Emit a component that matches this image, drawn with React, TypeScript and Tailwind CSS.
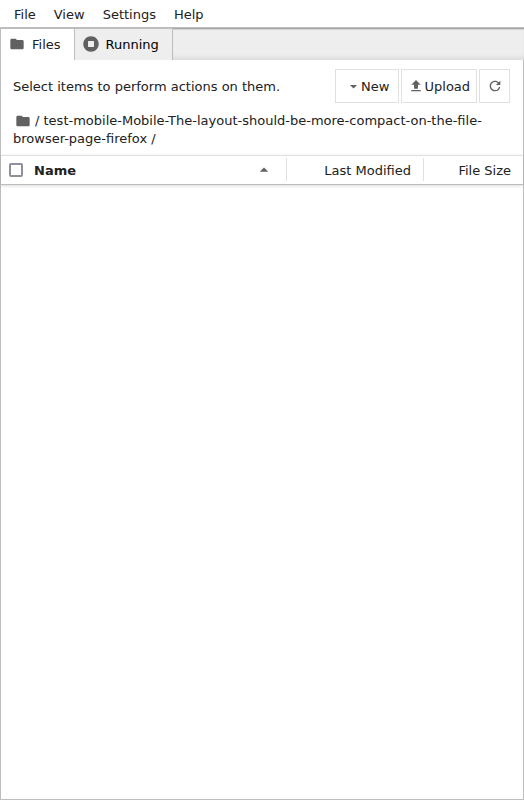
import React from 'react';

const FolderIcon = ({ className = '' }: { className?: string }) => (
  <svg viewBox="0 0 24 24" className={`shrink-0 fill-[#616161] ${className}`}>
    <path d="M10 4H4c-1.1 0-1.99.9-1.99 2L2 18c0 1.1.9 2 2 2h16c1.1 0 2-.9 2-2V8c0-1.1-.9-2-2-2h-8l-2-2z" />
  </svg>
);

const RunningIcon = () => (
  <svg viewBox="0 0 512 512" className="size-4 shrink-0 fill-[#616161]">
    <path d="M256 8C119 8 8 119 8 256s111 248 248 248 248-111 248-248S393 8 256 8zm96 328c0 8.8-7.2 16-16 16H176c-8.8 0-16-7.2-16-16V176c0-8.8 7.2-16 16-16h160c8.8 0 16 7.2 16 16v160z" />
  </svg>
);

const button = 'flex h-[34px] shrink-0 items-center border border-[#e0e0e0] bg-white';

export default function App() {
  return (
    <div className="flex h-[800px] w-[524px] flex-col overflow-hidden bg-white font-['DejaVu_Sans',sans-serif] text-[13px] leading-[18px] text-[#212121]">
      <nav className="flex h-7 shrink-0 items-center gap-[18px] border-b border-[#bdbdbd] pt-[3px] pl-3.5">
        <span>File</span>
        <span>View</span>
        <span>Settings</span>
        <span>Help</span>
      </nav>
      <div className="flex h-8 shrink-0 bg-[#eeeeee] shadow-[inset_0_-5px_6px_-4px_rgba(0,0,0,0.12)]">
        <div className="flex w-[75px] items-center border-x border-t border-[#bdbdbd] bg-white pl-2">
          <FolderIcon className="-mt-px size-4" />
          <span className="ml-[7px]">Files</span>
        </div>
        <div className="flex w-[98px] items-center border-t border-r border-[#bdbdbd] bg-[#eeeeee] pl-2 text-black">
          <span className="-mt-px"><RunningIcon /></span>
          <span className="ml-[6.5px]">Running</span>
        </div>
        <div className="flex-1 border-t border-[#a8a8a8] shadow-[inset_0_1px_0_#d2d2d2]" />
      </div>
      <main className="flex flex-1 flex-col border-x border-b border-[#bdbdbd]">
        <div className="flex h-[52px] items-center gap-0.5 pr-[13px] pl-3">
          <span className="flex-1 pt-0.5">Select items to perform actions on them.</span>
          <button className={`${button} w-16 pl-[8.5px]`}>
            <svg viewBox="0 0 18 18" className="size-[17px] fill-[#616161]"><path d="M5.2 7.5 9 11.2l3.8-3.7z" /></svg>
            <span className="-ml-[0.5px] pt-0.5">New</span>
          </button>
          <button className={`${button} w-[76px] pl-1.5`}>
            <svg viewBox="0 0 24 24" className="size-4 fill-[#616161]"><path d="M9 16h6v-6h4l-7-7-7 7h4zm-4 2h14v2H5z" /></svg>
            <span className="ml-[0.5px] pt-0.5">Upload</span>
          </button>
          <button className={`${button} w-[31px] justify-center`}>
            <svg viewBox="0 0 18 18" className="size-4 fill-[#616161]"><path d="M9 13.5c-2.49 0-4.5-2.01-4.5-4.5S6.51 4.5 9 4.5c1.24 0 2.36.52 3.17 1.33L10 8h5V3l-1.76 1.76C12.15 3.68 10.66 3 9 3 5.69 3 3.01 5.69 3.01 9S5.69 15 9 15c2.97 0 5.43-2.16 5.9-5h-1.52c-.46 2-2.24 3.5-4.38 3.5z" /></svg>
          </button>
        </div>
        <div className="h-[43px] shrink-0 pl-3">
          <div className="flex h-[18px] items-center whitespace-pre">
            <FolderIcon className="mr-1 ml-0.5 size-4" />
            <span>/ test-mobile-Mobile-The-layout-should-be-more-compact-on-the-file-</span>
          </div>
          <div>browser-page-firefox /</div>
        </div>
        <div className="flex h-[30px] shrink-0 items-start border-t border-b border-t-[#e0e0e0] border-b-[#bdbdbd] pt-0.5 shadow-[0_1px_3px_rgba(0,0,0,0.15)]">
          <div className="flex h-[23px] w-[286px] items-center border-r border-[#e0e0e0] pl-2">
            <span className="size-3.5 rounded-[2px] border-2 border-[#8f8f9d]" />
            <strong className="ml-[11px] flex-1 pt-[3px]">Name</strong>
            <svg viewBox="0 0 18 18" className="mr-3 size-5 fill-[#616161]"><path d="M5.2 10.5 9 6.8l3.8 3.7z" /></svg>
          </div>
          <div className="flex h-[23px] w-[137px] items-center justify-end border-r border-[#e0e0e0] pt-[3px] pr-3">Last Modified</div>
          <div className="flex h-[23px] flex-1 items-center justify-end pt-[3px] pr-3">File Size</div>
        </div>
      </main>
    </div>
  );
}
